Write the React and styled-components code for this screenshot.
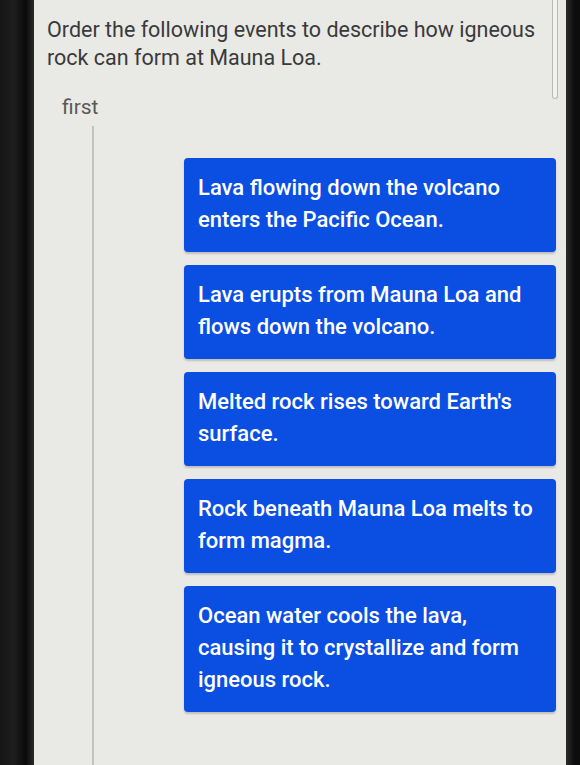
import React from "react";
import styled, { createGlobalStyle } from "styled-components";

const GlobalStyle = createGlobalStyle`
  html, body {
    margin: 0;
    padding: 0;
    background: #0c0c0c;
  }
  body {
    font-family: Roboto, "Noto Sans", Arial, sans-serif;
  }
`;

const events = [
  "Lava flowing down the volcano enters the Pacific Ocean.",
  "Lava erupts from Mauna Loa and flows down the volcano.",
  "Melted rock rises toward Earth's surface.",
  "Rock beneath Mauna Loa melts to form magma.",
  "Ocean water cools the lava, causing it to crystallize and form igneous rock."
];

export default function App() {
  return (
    <>
      <GlobalStyle />
      <Device>
        <Bezel />
        <Screen>
          <ScrollThumb />
          <Question>
            Order the following events to describe how igneous rock can form at
            Mauna Loa.
          </Question>
          <Label>first</Label>
          <ListArea>
            <Rail />
            <Cards>
              {events.map(text => (
                <Card key={text}>{text}</Card>
              ))}
            </Cards>
          </ListArea>
        </Screen>
        <RightEdge />
      </Device>
    </>
  );
}

const Device = styled.div`
  display: flex;
  width: 580px;
  height: 765px;
  overflow: hidden;
  background: #0c0c0c;
`;

const Bezel = styled.div`
  width: 34px;
  flex-shrink: 0;
  background: linear-gradient(90deg, #151515 0%, #1e1e1e 40%, #0a0a0a 75%, #2a2a2a 100%);
`;

const Screen = styled.div`
  position: relative;
  width: 532px;
  flex-shrink: 0;
  background: #e9e9e6;
  padding: 16px 0 0 13px;
  box-sizing: border-box;
`;

const ScrollThumb = styled.div`
  position: absolute;
  top: 0;
  right: 8px;
  width: 4px;
  height: 98px;
  border: 1px solid #b9b9b6;
  border-top: none;
  border-radius: 0 0 3px 3px;
  background: #f1f1ef;
`;

const RightEdge = styled.div`
  flex: 1;
  background: linear-gradient(90deg, #2b2b2b 0%, #0d0d0d 60%);
`;

const Question = styled.p`
  margin: 0;
  width: 505px;
  font-size: 21.5px;
  line-height: 28px;
  color: #3a3a3a;
  font-weight: 400;
`;

const Label = styled.div`
  margin: 22px 0 0 15px;
  font-size: 21px;
  line-height: 26px;
  color: #595959;
`;

const ListArea = styled.div`
  display: flex;
  margin-top: 6px;
  padding-left: 45px;
`;

const Rail = styled.div`
  width: 2px;
  height: 660px;
  background: #c2c2bf;
  flex-shrink: 0;
`;

const Cards = styled.div`
  display: flex;
  flex-direction: column;
  gap: 13px;
  margin: 32px 0 0 90px;
  width: 372px;
`;

const Card = styled.div`
  background: #0a4ee2;
  color: #ffffff;
  border-radius: 4px;
  padding: 14px 14px 16px;
  font-size: 22px;
  line-height: 32px;
  font-weight: 500;
  box-shadow: 0 2px 2px rgba(0, 0, 0, 0.18);
`;
